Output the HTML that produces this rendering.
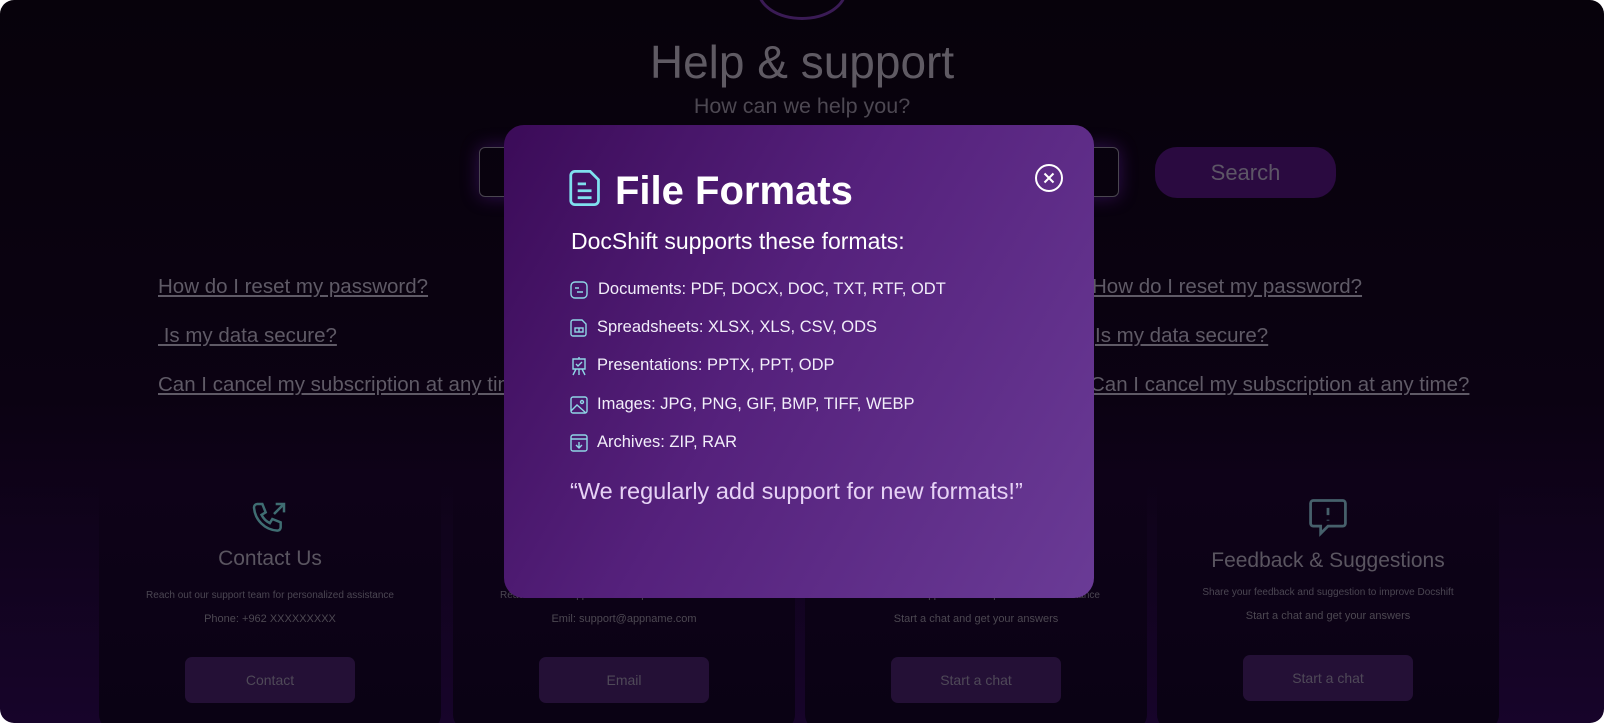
<!DOCTYPE html>
<html><head><meta charset="utf-8"><style>
*{margin:0;padding:0;box-sizing:border-box}
html,body{width:1604px;height:723px;background:#fff;overflow:hidden}
body{font-family:"Liberation Sans",sans-serif}
.frame{position:absolute;left:0;top:0;width:1604px;height:723px;border-radius:14px;overflow:hidden;
background:linear-gradient(180deg,#07020b 0%,#0b0212 55%,#17042a 100%)}
.abs{position:absolute}
.h1{left:0;width:1604px;top:35px;text-align:center;font-size:46px;color:#5f5a63}
.sub{left:0;width:1604px;top:94px;text-align:center;font-size:21.5px;color:#4d4852}
.inp{left:479px;top:147px;width:640px;height:50px;border:1px solid #4a4650;border-radius:6px;box-shadow:0 0 18px rgba(120,40,200,.35)}
.sbtn{left:1155px;top:147px;width:181px;height:51px;border-radius:22px;background:#2a0a40;color:#5d5666;font-size:22px;text-align:center;line-height:51px}
.lk{font-size:20.5px;color:#5f5a66;text-decoration:underline;white-space:nowrap}
.card{top:469px;width:342px;height:260px;border-radius:14px;background:linear-gradient(180deg,#0e0218,#0a0214);text-align:center}
.card .t{position:absolute;left:0;right:0;top:78px;font-size:21px;color:#5a5560}
.card .d{position:absolute;left:0;right:0;top:121px;font-size:10px;color:#4b4652}
.card .p{position:absolute;left:0;right:0;top:144px;font-size:11px;color:#4d4852}
.card .b{position:absolute;left:86px;top:188px;width:170px;height:46px;border-radius:7px;background:#241036;color:#4f4958;font-size:14px;line-height:46px}
.card svg{position:absolute;left:150px;top:30px}
.modal{left:504px;top:125px;width:590px;height:473px;border-radius:20px;background:linear-gradient(120deg,#3b0b58 0%,#55217c 45%,#6a3b96 100%);color:#fff}
.it{position:absolute;left:65px;padding-left:28px;font-size:16.5px;color:#f2eefa;white-space:nowrap}
.it svg{position:absolute;left:0;top:0}
</style></head><body>
<div class="frame">
 <div class="abs" style="left:757px;top:-40px;width:90px;height:60px;border:3px solid #3a1b55;border-radius:50%"></div>
 <div class="abs h1">Help &amp; support</div>
 <div class="abs sub">How can we help you?</div>
 <div class="abs inp"></div>
 <div class="abs sbtn">Search</div>
 <div class="abs lk" style="left:158px;top:275px">How do I reset my password?</div>
 <div class="abs lk" style="left:158px;top:324px">&nbsp;Is my data secure?</div>
 <div class="abs lk" style="left:158px;top:373px">Can I cancel my subscription at any time?</div>
 <div class="abs lk" style="left:1092px;top:275px">How do I reset my password?</div>
 <div class="abs lk" style="left:1095px;top:324px">Is my data secure?</div>
 <div class="abs lk" style="left:1090px;top:373px">Can I cancel my subscription at any time?</div>

 <div class="abs card" style="left:99px">
  <svg width="40" height="40" viewBox="0 0 24 24" fill="none" stroke="#3f6d72" stroke-width="1.5"><path d="M5 3h3l2 5-2.5 1.5a11 11 0 0 0 5 5L14 12l5 2v3a2 2 0 0 1-2 2A15 15 0 0 1 3 5a2 2 0 0 1 2-2"/><path d="M15 9l6-6M16 3h5v5"/></svg>
  <div class="t">Contact Us</div><div class="d">Reach out our support team for personalized assistance</div><div class="p">Phone: +962 XXXXXXXXX</div><div class="b">Contact</div></div>
 <div class="abs card" style="left:453px">
  <div class="t"></div><div class="d">Reach out our support team for personalized assistance</div><div class="p">Emil: support@appname.com</div><div class="b">Email</div></div>
 <div class="abs card" style="left:805px">
  <div class="d">Reach out our support team for personalized assistance</div><div class="p">Start a chat and get your answers</div><div class="b">Start a chat</div></div>
 <div class="abs card" style="left:1157px">
  <svg width="44" height="44" viewBox="0 0 24 24" fill="none" stroke="#46606b" stroke-width="1.5" style="top:26px;left:149px"><path d="M4 3h16a1.5 1.5 0 0 1 1.5 1.5v11A1.5 1.5 0 0 1 20 17H12l-4 4v-4H4a1.5 1.5 0 0 1-1.5-1.5v-11A1.5 1.5 0 0 1 4 3z"/><path d="M12 7v4M12 13.5v.5"/></svg>
  <div class="t" style="top:80px">Feedback &amp; Suggestions</div><div class="d" style="top:118px">Share your feedback and suggestion to improve Docshift</div><div class="p" style="top:141px">Start a chat and get your answers</div><div class="b" style="top:186px">Start a chat</div></div>

 <div class="abs modal">
  <svg class="abs" style="left:65px;top:45px" width="34" height="36" viewBox="0 0 24 26" fill="none" stroke="#7fe0ee" stroke-width="2"><path d="M4 1h11l6 6v15a3 3 0 0 1-3 3H4a3 3 0 0 1-3-3V4a3 3 0 0 1 3-3z"/><path d="M6 10h6M6 15h10M6 20h10"/></svg>
  <div class="abs" style="left:111px;top:44px;font-size:40px;font-weight:bold">File Formats</div>
  <svg class="abs" style="left:530px;top:38px" width="30" height="30" viewBox="0 0 30 30" fill="none" stroke="#fff" stroke-width="2"><circle cx="15" cy="15" r="13"/><path d="M10.5 10.5l9 9M19.5 10.5l-9 9"/></svg>
  <div class="abs" style="left:67px;top:103px;font-size:23px;white-space:nowrap">DocShift supports these formats:</div>
  <div class="it" style="top:155px;padding-left:29px"><svg width="20" height="20" viewBox="0 0 20 20" fill="none" stroke="#8fd6e6" stroke-width="1.4"><rect x="2" y="2" width="16" height="16" rx="4"/><path d="M6 8h4M8 12h6"/></svg>Documents: PDF, DOCX, DOC, TXT, RTF, ODT</div>
  <div class="it" style="top:193px"><svg width="20" height="20" viewBox="0 0 20 20" fill="none" stroke="#8fd6e6" stroke-width="1.4"><path d="M4 2h9l4 4v10a2 2 0 0 1-2 2H4a2 2 0 0 1-2-2V4a2 2 0 0 1 2-2z"/><rect x="6" y="10" width="8" height="4"/><path d="M10 10v4"/></svg>Spreadsheets: XLSX, XLS, CSV, ODS</div>
  <div class="it" style="top:231px"><svg width="20" height="20" viewBox="0 0 20 20" fill="none" stroke="#8fd6e6" stroke-width="1.4"><path d="M10 1v2M4 3h12v10H4zM7 8l2 2 4-4M7 13l-3 6M13 13l3 6M10 13v6"/></svg>Presentations: PPTX, PPT, ODP</div>
  <div class="it" style="top:270px"><svg width="20" height="20" viewBox="0 0 20 20" fill="none" stroke="#8fd6e6" stroke-width="1.4"><rect x="2" y="2" width="16" height="16" rx="2"/><circle cx="13" cy="7" r="1.5"/><path d="M2 16l6-6 9 8"/></svg>Images: JPG, PNG, GIF, BMP, TIFF, WEBP</div>
  <div class="it" style="top:308px"><svg width="20" height="20" viewBox="0 0 20 20" fill="none" stroke="#8fd6e6" stroke-width="1.4"><rect x="2" y="2" width="16" height="16" rx="2"/><path d="M2 6h16M10 9v6M7 12l3 3 3-3"/></svg>Archives: ZIP, RAR</div>
  <div class="abs" style="left:66px;top:353px;font-size:23.5px;color:#e6d2f5;white-space:nowrap">“We regularly add support for new formats!”</div>
 </div>
</div>
</body></html>
